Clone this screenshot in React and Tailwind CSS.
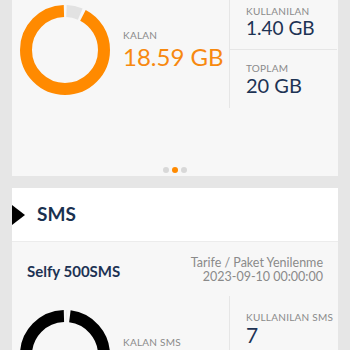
import React from 'react';

const font = { fontFamily: 'Lato, "Open Sans", sans-serif' };

function Donut({ used, total, color, rest, size = 90, stroke = 12 }) {
  const r = (size - stroke) / 2;
  const c = 2 * Math.PI * r;
  const usedLen = (used / total) * c;
  const gap = 3;
  return (
    <svg width={size} height={size} viewBox={`0 0 ${size} ${size}`} className="shrink-0">
      <g transform={`rotate(-90 ${size / 2} ${size / 2})`}>
        <circle
          cx={size / 2}
          cy={size / 2}
          r={r}
          fill="none"
          stroke={rest}
          strokeWidth={stroke}
          strokeDasharray={`${Math.max(usedLen - gap, 0)} ${c}`}
          strokeDashoffset={-gap / 2}
        />
        <circle
          cx={size / 2}
          cy={size / 2}
          r={r}
          fill="none"
          stroke={color}
          strokeWidth={stroke}
          strokeDasharray={`${c - usedLen - gap} ${c}`}
          strokeDashoffset={-(usedLen + gap / 2)}
        />
      </g>
    </svg>
  );
}

export default function App() {
  return (
    <div className="w-[350px] h-[350px] overflow-hidden bg-[#e6e6e6]" style={font}>
      {/* Data card */}
      <div className="mx-3 h-[176px] bg-[#f7f7f7] flex flex-col">
        <div className="flex h-[108px]">
          <div className="w-[218px] flex border-r border-[#e6e6e6]">
            <div className="pl-2 pt-[5px]">
              <Donut used={1.4} total={20} color="#ff8a00" rest="#e2e2e2" />
            </div>
            <div className="pl-[13px] pt-[29px]">
              <div className="text-[10px] leading-[12px] text-[#8a8a8a] tracking-wide">KALAN</div>
              <div className="text-[24px] leading-[28px] text-[#f7890f] mt-[2px]">18.59 GB</div>
            </div>
          </div>
          <div className="flex-1 flex flex-col mr-px">
            <div className="h-[50px] border-b border-[#e6e6e6] pl-4 pt-[5px]">
              <div className="text-[10px] leading-[12px] text-[#8a8a8a] tracking-wide">KULLANILAN</div>
              <div className="text-[19px] leading-[22px] text-[#1d3354]">1.40 GB</div>
            </div>
            <div className="pl-4 pt-[12px]">
              <div className="text-[10px] leading-[12px] text-[#8a8a8a] tracking-wide">TOPLAM</div>
              <div className="text-[20px] leading-[22px] text-[#1d3354]">20 GB</div>
            </div>
          </div>
        </div>
        <div className="mt-auto mb-[3px] flex justify-center gap-[3px]">
          <span className="w-[6px] h-[6px] rounded-full bg-[#d8d8d8]" />
          <span className="w-[6px] h-[6px] rounded-full bg-[#ff8a00]" />
          <span className="w-[6px] h-[6px] rounded-full bg-[#d8d8d8]" />
        </div>
      </div>

      {/* SMS card */}
      <div className="mx-3 mt-3 bg-[#f7f7f7]">
        <div className="h-[54px] bg-white border-b border-[#ececec] flex items-center">
          <span className="w-0 h-0 border-y-[10px] border-y-transparent border-l-[13px] border-l-black" />
          <span className="ml-3 text-[19px] font-bold text-[#1a3150]">SMS</span>
        </div>
        <div className="flex justify-between px-[15px] pt-[14px]">
          <div className="pt-[4px] text-[15px] font-bold text-[#1d3354]">Selfy 500SMS</div>
          <div className="text-right text-[12.5px] leading-[14px] text-[#8a8a8a]">
            <div>Tarife / Paket Yenilenme</div>
            <div>2023-09-10 00:00:00</div>
          </div>
        </div>
        <div className="flex mt-[12px] h-[80px]">
          <div className="w-[218px] flex border-r border-[#e6e6e6]">
            <div className="pl-2 pt-[14px]">
              <Donut used={7} total={500} color="#000" rest="#e2e2e2" />
            </div>
            <div className="pl-[13px] pt-[40px]">
              <div className="text-[10px] leading-[12px] text-[#8a8a8a] tracking-wide">KALAN SMS</div>
            </div>
          </div>
          <div className="flex-1 pl-4 pt-[15px]">
            <div className="text-[10px] leading-[12px] text-[#8a8a8a] tracking-wide">KULLANILAN SMS</div>
            <div className="text-[21px] leading-[24px] text-[#1d3354]">7</div>
          </div>
        </div>
      </div>
    </div>
  );
}
